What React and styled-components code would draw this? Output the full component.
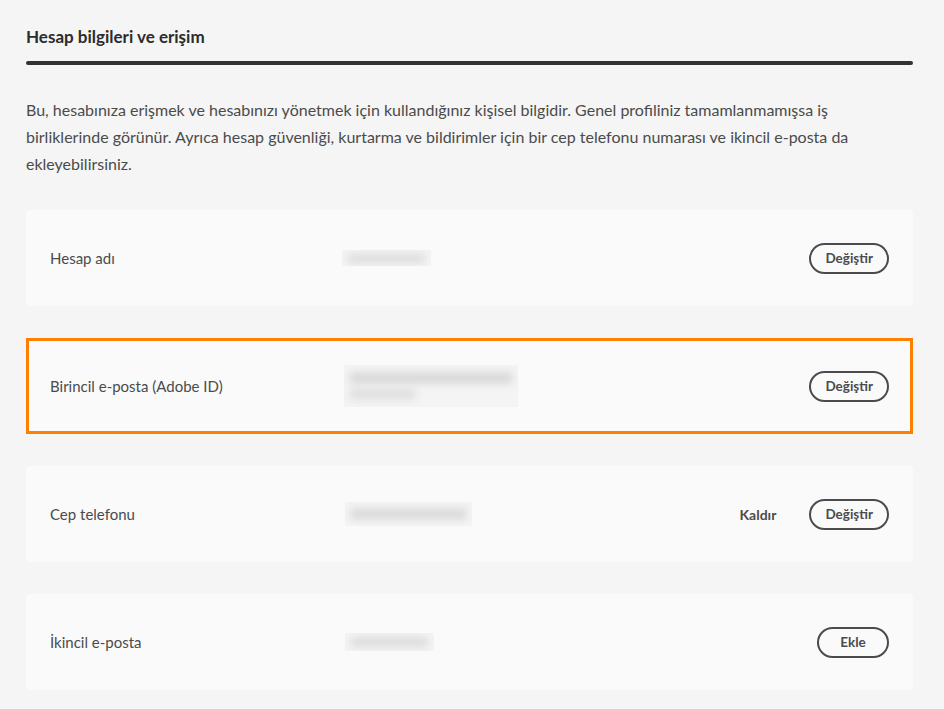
import React from 'react'
import styled, {createGlobalStyle} from 'styled-components'

const Global = createGlobalStyle`
  html, body {
    margin: 0;
    padding: 0;
    background: #f5f5f5;
  }
  body {
    font-family: Lato, "Open Sans", "Liberation Sans", sans-serif;
    color: #4b4b4b;
  }
`

const Page = styled.div`
  width: 887px;
  padding: 26px 0 20px 26px;
`

const Title = styled.h2`
  margin: 0;
  font-size: 17px;
  line-height: 22px;
  font-weight: 700;
  color: #2c2c2c;
`

const Rule = styled.div`
  height: 4px;
  margin-top: 13px;
  border-radius: 2px;
  background: #323232;
`

const Intro = styled.p`
  margin: 31px 0 33px;
  font-size: 16px;
  line-height: 27px;
  color: #4b4b4b;
`

const List = styled.div`
  display: flex;
  flex-direction: column;
  gap: 32px;
`

const Card = styled.div`
  display: flex;
  align-items: center;
  height: 96px;
  box-sizing: border-box;
  padding: 0 24px;
  background: #fafafa;
  border-radius: ${p => (p.$highlight ? '0' : '4px')};
  box-shadow: ${p => (p.$highlight ? 'inset 0 0 0 3px #ff8000' : 'none')};
`

const Label = styled.div`
  width: 292px;
  flex-shrink: 0;
  font-size: 15px;
  color: #4b4b4b;
`

const Value = styled.div`
  flex: 1;
`

const Redacted = styled.div`
  display: flex;
  flex-direction: column;
  justify-content: center;
  gap: 6px;
  width: ${p => p.$w}px;
  height: ${p => p.$h}px;
  margin-left: ${p => p.$x || 0}px;
  padding: 0 6px;
  box-sizing: border-box;
  overflow: hidden;
  background: #f4f4f4;
`

const Blur = styled.div`
  width: ${p => p.$w || 100}%;
  height: ${p => p.$h || 8}px;
  background: ${p => p.$tone || '#d6d6d6'};
  filter: blur(4px);
`

const Actions = styled.div`
  display: flex;
  align-items: center;
  gap: 33px;
`

const LinkButton = styled.button`
  border: none;
  background: none;
  padding: 0;
  font-family: inherit;
  font-size: 14px;
  font-weight: 700;
  color: #4b4b4b;
  cursor: pointer;
`

const PillButton = styled.button`
  box-sizing: border-box;
  height: 31px;
  min-width: ${p => p.$min || 78}px;
  padding: 0 14px;
  border: 2px solid #4b4b4b;
  border-radius: 16px;
  background: transparent;
  font-family: inherit;
  font-size: 13.5px;
  font-weight: 700;
  color: #4b4b4b;
  cursor: pointer;
`

const Row = ({label, highlight, children, value}) => (
  <Card $highlight={highlight}>
    <Label>{label}</Label>
    <Value>{value}</Value>
    <Actions>{children}</Actions>
  </Card>
)

const App = () => (
  <Page>
    <Global/>
    <Title>Hesap bilgileri ve erişim</Title>
    <Rule/>
    <Intro>
      Bu, hesabınıza erişmek ve hesabınızı yönetmek için kullandığınız kişisel bilgidir. Genel profiliniz tamamlanmamışsa iş birliklerinde görünür. Ayrıca hesap güvenliği, kurtarma ve bildirimler için bir cep telefonu numarası ve ikincil e-posta da ekleyebilirsiniz.
    </Intro>
    <List>
      <Row
        label="Hesap adı"
        value={<Redacted $w={89} $h={16}><Blur $h={7}/></Redacted>}
      >
        <PillButton>Değiştir</PillButton>
      </Row>
      <Row
        label="Birincil e-posta (Adobe ID)"
        highlight
        value={
          <Redacted $w={174} $h={42} $x={2}>
            <Blur $h={10} $tone="#d4d4d4"/>
            <Blur $h={10} $w={40} $tone="#dcdcdc"/>
          </Redacted>
        }
      >
        <PillButton>Değiştir</PillButton>
      </Row>
      <Row
        label="Cep telefonu"
        value={<Redacted $w={127} $h={24} $x={3}><Blur $h={10}/></Redacted>}
      >
        <LinkButton>Kaldır</LinkButton>
        <PillButton>Değiştir</PillButton>
      </Row>
      <Row
        label="İkincil e-posta"
        value={<Redacted $w={89} $h={18} $x={3}><Blur $h={8}/></Redacted>}
      >
        <PillButton $min={72}>Ekle</PillButton>
      </Row>
    </List>
  </Page>
)

export default App
